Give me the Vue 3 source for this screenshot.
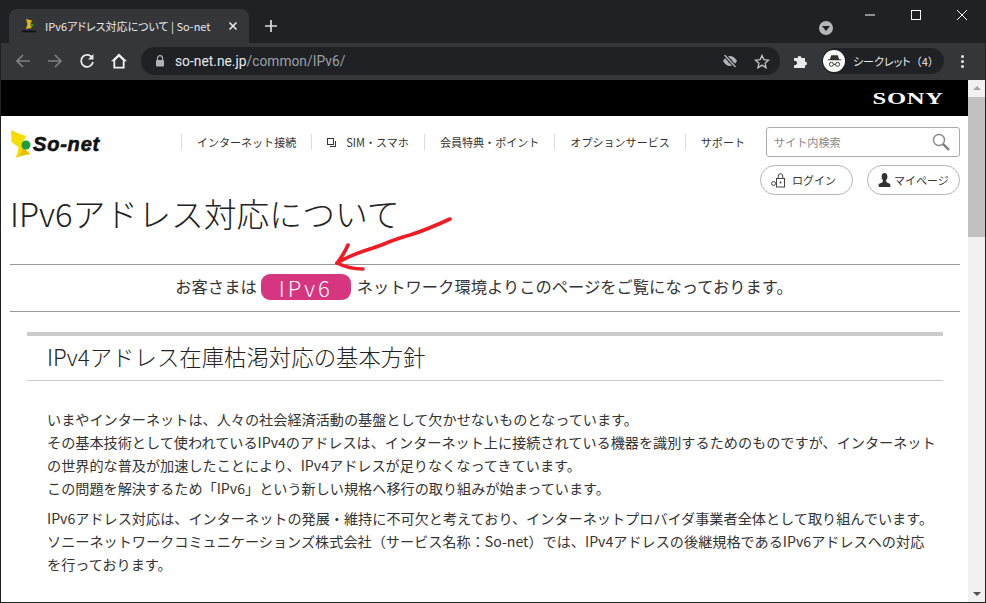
<template>
  <div class="window">
    <!-- タブバー -->
    <div class="tabstrip">
      <div class="tab">
        <svg class="favicon" width="16" height="16" viewBox="0 0 16 16">
          <path d="M5 1l6 1.500-1.500 3 1 4.500-5.500 1 1.500-5z" fill="#e8b810" />
          <circle cx="11" cy="7" r="1.600" fill="#2a9a30" />
          <rect x="1" y="12.500" width="14" height="1.800" fill="#111" />
        </svg>
        <span class="tab-title">IPv6アドレス対応について | So-net</span>
        <svg class="tab-close" width="10" height="10" viewBox="0 0 10 10">
          <path d="M1.500 1.500l7 7M8.500 1.500l-7 7" stroke="#e8eaed" stroke-width="1.600" />
        </svg>
      </div>
      <svg class="newtab" width="14" height="14" viewBox="0 0 14 14">
        <path d="M7 1v12M1 7h12" stroke="#dadce0" stroke-width="1.700" />
      </svg>
      <div class="strip-space"></div>
      <div class="tabsearch"><span></span></div>
      <div class="winbtns">
        <svg width="46" height="30" viewBox="0 0 46 30"><path d="M18 15h10" stroke="#fff" /></svg>
        <svg width="46" height="30" viewBox="0 0 46 30"><rect x="18.500" y="10.500" width="9" height="9" fill="none" stroke="#fff" /></svg>
        <svg width="46" height="30" viewBox="0 0 46 30"><path d="M18 10l10 10M28 10L18 20" stroke="#fff" /></svg>
      </div>
    </div>

    <!-- ツールバー -->
    <div class="toolbar">
      <svg class="tb-icon" width="16" height="16" viewBox="0 0 16 16">
        <path d="M15 8H2M8 2L2 8l6 6" fill="none" stroke="#7d8084" stroke-width="1.700" />
      </svg>
      <svg class="tb-icon" width="16" height="16" viewBox="0 0 16 16">
        <path d="M1 8h13M8 2l6 6-6 6" fill="none" stroke="#7d8084" stroke-width="1.700" />
      </svg>
      <svg class="tb-icon" width="16" height="16" viewBox="0 0 16 16">
        <path d="M13.500 5.200A6 6 0 1 0 14 9" fill="none" stroke="#e8eaed" stroke-width="1.800" />
        <path d="M14.500 1v5.500H9z" fill="#e8eaed" />
      </svg>
      <svg class="tb-icon" width="16" height="16" viewBox="0 0 16 16">
        <path d="M8 .500L0 8.300h2.400v7.200h11.200V8.300H16zM4.200 13.800V7.600L8 3.800l3.800 3.800v6.200z" fill="#f1f3f4" />
      </svg>
      <div class="omnibox">
        <svg class="lock" width="10" height="12" viewBox="0 0 10 12">
          <path d="M2.500 5V3.200a2.500 2.500 0 0 1 5 0V5" fill="none" stroke="#aeb1b5" stroke-width="1.200" />
          <rect x="1" y="5" width="8" height="6.500" rx="1" fill="#aeb1b5" />
        </svg>
        <span class="url"><b>so-net.ne.jp</b>/common/IPv6/</span>
        <svg class="omni-eye" width="16" height="14" viewBox="0 0 16 14">
          <path d="M1 7c2-3.400 4.400-5 7-5s5 1.600 7 5c-2 3.400-4.400 5-7 5s-5-1.600-7-5z" fill="#aeb1b5" />
          <circle cx="8" cy="7" r="2" fill="#202124" />
          <path d="M2.500 1l11 12" stroke="#202124" stroke-width="3.400" />
          <path d="M2.500 1l11 12" stroke="#aeb1b5" stroke-width="1.400" />
        </svg>
        <svg class="omni-star" width="16" height="15" viewBox="0 0 16 15">
          <path d="M8 1.500l1.900 4.200 4.600.5-3.400 3.100.9 4.500L8 11.100l-4 2.700.9-4.500L1.500 6.200l4.600-.5z" fill="none" stroke="#c4c7ca" stroke-width="1.300" />
        </svg>
      </div>
      <svg class="puzzle" width="16" height="16" viewBox="0 0 16 16">
        <path d="M1 5h3.500a2 2 0 1 1 4 0H12v3.500a2 2 0 1 1 0 4V15H1v-3a2.200 2.200 0 1 0 0-4z" fill="#e8eaed" />
      </svg>
      <div class="incognito">
        <span class="inc-avatar">
          <svg width="18" height="16" viewBox="0 0 18 16">
            <path d="M5 1h8l1.500 5H17v1.200H1V6h2.500z" fill="#333" />
            <circle cx="5.300" cy="12" r="2.400" fill="none" stroke="#333" stroke-width="1.200" />
            <circle cx="12.700" cy="12" r="2.400" fill="none" stroke="#333" stroke-width="1.200" />
            <path d="M7.700 12h2.600" stroke="#333" stroke-width="1.200" />
          </svg>
        </span>
        <span class="inc-label">シークレット<span class="inc-count">（4）</span></span>
      </div>
      <span class="kebab"><i></i><i></i><i></i></span>
    </div>

    <!-- ページ -->
    <div class="viewport">
      <div class="page">
        <div class="sonybar"><span class="sony">SONY</span></div>

        <header class="site-head">
          <div class="logo">
            <svg width="24" height="30" viewBox="0 0 24 30">
              <path d="M1 1c5 2.500 10 4.500 15 6l-4 8c2 4 4.500 7.500 8.500 10-5.500.500-10.500 2-15 4 1.500-3.500 3-7 3-11-2.500-1.500-5-3.500-7-5z" fill="#f7dc00" />
              <path d="M12 15c2 4 4.500 7.500 8.500 10-4.500.400-9 1.600-13 3.200 3.500-3.500 5.500-7.600 4.500-13.200z" fill="#e6c000" />
              <circle cx="16" cy="16" r="4.500" fill="#1e9c3a" />
            </svg>
            <span class="logo-text">So-net</span>
          </div>
          <div class="head-right">
            <div class="head-row">
              <nav class="gnav">
                <a v-for="item in navItems" :key="item.label" class="gnav-item">
                  <svg v-if="item.icon" class="gnav-icon" width="9" height="9" viewBox="0 0 9 9">
                    <rect x="0.500" y="0.500" width="6" height="6" fill="none" stroke="#333" />
                    <path d="M8.500 3v5.500H3" fill="none" stroke="#333" />
                  </svg>
                  {{ item.label }}
                </a>
              </nav>
              <div class="search">
                <span class="search-ph">サイト内検索</span>
                <svg width="18" height="18" viewBox="0 0 18 18">
                  <circle cx="7" cy="7" r="5.500" fill="none" stroke="#888" stroke-width="1.400" />
                  <path d="M11 11l6 6" stroke="#777" stroke-width="2.400" />
                </svg>
              </div>
            </div>
            <div class="head-row2">
              <a class="pill pill-login">
                <svg width="14" height="15" viewBox="0 0 14 15">
                  <rect x="5.500" y="5.500" width="8" height="8.500" fill="none" stroke="#444" />
                  <path d="M7.200 5.500V3a2.300 2.300 0 0 1 4.600 0v2.500" fill="none" stroke="#444" />
                  <circle cx="9.500" cy="9.500" r="1" fill="#444" />
                  <circle cx="2.500" cy="10.500" r="2" fill="none" stroke="#444" />
                </svg>
                ログイン
              </a>
              <a class="pill pill-mypage">
                <svg width="13" height="14" viewBox="0 0 13 14">
                  <ellipse cx="6.500" cy="3.800" rx="2.900" ry="3.800" fill="#333" />
                  <path d="M5 7h3l.5 2.200 3.800 1.800V14H.7v-3l3.800-1.800z" fill="#333" />
                </svg>
                マイページ
              </a>
            </div>
          </div>
        </header>

        <h1 class="page-title">IPv6アドレス対応について</h1>
        <div class="notice">
          お客さまは<span class="badge">IPv6</span>ネットワーク環境よりこのページをご覧になっております。
        </div>

        <section class="policy">
          <h2>IPv4アドレス在庫枯渇対応の基本方針</h2>
          <p>
            いまやインターネットは、人々の社会経済活動の基盤として欠かせないものとなっています。<br />
            その基本技術として使われているIPv4のアドレスは、インターネット上に接続されている機器を識別するためのものですが、インターネットの世界的な普及が加速したことにより、IPv4アドレスが足りなくなってきています。<br />
            この問題を解決するため「IPv6」という新しい規格へ移行の取り組みが始まっています。
          </p>
          <p>
            IPv6アドレス対応は、インターネットの発展・維持に不可欠と考えており、インターネットプロバイダ事業者全体として取り組んでいます。<br />
            ソニーネットワークコミュニケーションズ株式会社（サービス名称：So-net）では、IPv4アドレスの後継規格であるIPv6アドレスへの対応を行っております。
          </p>
        </section>

        <!-- 赤い手書き矢印 -->
        <svg class="arrow" width="130" height="60" viewBox="0 0 130 60">
          <path d="M117 6C104 12 90 18 77 22C64 25 52 31 40 35C27 39 14 44 4 50" fill="none" stroke="#ee1c25" stroke-width="3.600" stroke-linecap="round" />
          <path d="M15 32C12 39 8 45 4 50C12 54 20 56 30 56" fill="none" stroke="#ee1c25" stroke-width="3.600" stroke-linecap="round" stroke-linejoin="round" />
        </svg>
      </div>

      <div class="scrollbar">
        <span class="sb-up"></span>
        <div class="sb-track"><div class="sb-thumb"></div></div>
        <span class="sb-down"></span>
      </div>
    </div>
  </div>
</template>

<script setup>
const navItems = [
  { label: 'インターネット接続' },
  { label: 'SIM・スマホ', icon: true },
  { label: '会員特典・ポイント' },
  { label: 'オプションサービス' },
  { label: 'サポート' }
]
</script>

<style scoped>
.window {
  width: 986px;
  height: 603px;
  box-sizing: border-box;
  display: flex;
  flex-direction: column;
  overflow: hidden;
  background: #202124;
  border: 1px solid #202124;
  border-top: 0;
  font-family: "Noto Sans CJK JP", "Noto Sans", sans-serif;
}

/* タブバー */
.tabstrip {
  height: 43px;
  flex: none;
  display: flex;
  align-items: flex-end;
  background: #202124;
}
.tab {
  width: 240px;
  height: 34px;
  margin-left: 8px;
  background: #35363a;
  border-radius: 8px 8px 0 0;
  display: flex;
  align-items: center;
  box-sizing: border-box;
  padding: 0 11px 0 12px;
  color: #e8eaed;
}
.favicon {
  flex: none;
}
.tab-title {
  margin-left: 8px;
  flex: 1;
  font-size: 11px;
  font-feature-settings: "palt";
  white-space: nowrap;
  overflow: hidden;
}
.newtab {
  margin: 0 0 10px 15px;
}
.strip-space {
  flex: 1;
}
.tabsearch {
  width: 14px;
  height: 14px;
  border-radius: 50%;
  background: #b4b6b9;
  margin: 0 0 8px 0;
  display: flex;
  align-items: center;
  justify-content: center;
}
.tabsearch span {
  width: 0;
  height: 0;
  border-left: 4px solid transparent;
  border-right: 4px solid transparent;
  border-top: 5px solid #202124;
  margin-top: 1px;
}
.winbtns {
  display: flex;
  align-self: flex-start;
  margin-left: 14px;
}

/* ツールバー */
.toolbar {
  height: 37px;
  flex: none;
  display: flex;
  align-items: center;
  background: #35363a;
  box-sizing: border-box;
  padding: 0 0 1px 14px;
}
.tb-icon {
  margin-right: 16px;
  flex: none;
}
.omnibox {
  width: 639px;
  height: 28px;
  margin-left: -2px;
  background: #202124;
  border-radius: 14px;
  display: flex;
  align-items: center;
  box-sizing: border-box;
  padding: 0 10px 0 14px;
}
.lock {
  flex: none;
}
.url {
  margin-left: 10px;
  flex: 1;
  font-family: "Roboto", "Noto Sans", sans-serif;
  font-size: 13.8px;
  color: #9aa0a6;
}
.url b {
  font-weight: 400;
  color: #e8eaed;
}
.omni-eye {
  margin-right: 16px;
}
.puzzle {
  margin-left: 13px;
  flex: none;
}
.incognito {
  width: 122px;
  height: 26px;
  margin-left: 13px;
  flex: none;
  border-radius: 13px;
  background: #202124;
  display: flex;
  align-items: center;
  box-sizing: border-box;
  padding-left: 1px;
}
.inc-avatar {
  width: 22px;
  height: 22px;
  border-radius: 50%;
  background: #fff;
  display: flex;
  align-items: center;
  justify-content: center;
}
.inc-avatar svg {
  width: 15px;
  height: 14px;
}
.inc-label {
  margin-left: 8px;
  color: #e8eaed;
  font-size: 11px;
  font-feature-settings: "palt";
  white-space: nowrap;
}
.inc-count {
  font-feature-settings: normal;
}
.kebab {
  margin-left: 17px;
  display: flex;
  flex-direction: column;
  gap: 2px;
}
.kebab i {
  width: 3px;
  height: 3px;
  border-radius: 50%;
  background: #e8eaed;
}

/* ページ */
.viewport {
  flex: 1;
  display: flex;
  min-height: 0;
  background: #fff;
}
.page {
  flex: 1;
  min-width: 0;
  position: relative;
  overflow: hidden;
  color: #333;
}
.sonybar {
  height: 36px;
  background: #000;
  display: flex;
  align-items: flex-end;
  justify-content: flex-end;
  padding: 0 24px 0 0;
  box-sizing: border-box;
}
.sony {
  font-family: "Liberation Serif", serif;
  font-weight: 700;
  font-size: 16.5px;
  line-height: 21px;
  color: #fff;
  transform: scaleX(1.49);
  transform-origin: right center;
  letter-spacing: 0.5px;
  margin-bottom: 7px;
}
.site-head {
  display: flex;
  padding: 11px 8px 0 9px;
  height: 79px;
  box-sizing: border-box;
}
.logo {
  display: flex;
  align-items: flex-start;
  padding-top: 2px;
}
.logo-text {
  font-family: "Liberation Sans", sans-serif;
  font-weight: 700;
  font-style: italic;
  font-size: 20px;
  line-height: 30px;
  letter-spacing: 0.8px;
  -webkit-text-stroke: 0.6px #111;
  color: #111;
  margin-left: -1px;
}
.head-right {
  margin-left: auto;
}
.head-row {
  display: flex;
  align-items: center;
}
.gnav {
  display: flex;
  margin-right: 6px;
}
.gnav-item {
  display: flex;
  align-items: center;
  height: 16px;
  padding: 0 15px;
  border-left: 1px solid #ddd;
  font-size: 11.05px;
  line-height: 16px;
  color: #333;
  white-space: nowrap;
}
.gnav-icon {
  margin-right: 10px;
}
.search {
  width: 194px;
  height: 30px;
  box-sizing: border-box;
  border: 1px solid #aaa;
  border-radius: 3px;
  display: flex;
  align-items: center;
  justify-content: space-between;
  padding: 0 9px 0 7px;
}
.search-ph {
  font-size: 11.1px;
  color: #888;
}
.head-row2 {
  display: flex;
  justify-content: flex-end;
  gap: 14px;
  margin-top: 8px;
}
.pill {
  width: 93px;
  height: 30px;
  box-sizing: border-box;
  border: 1px solid #b5b5b5;
  border-radius: 15px;
  display: flex;
  align-items: center;
  font-size: 11px;
  color: #333;
  white-space: nowrap;
}
.pill-login {
  padding-left: 10px;
  gap: 7px;
}
.pill-mypage {
  padding-left: 10px;
  gap: 3px;
}
.page-title {
  margin: -4px 8px 0 9px;
  font-size: 32.8px;
  font-weight: 300;
  line-height: 44px;
  height: 74px;
  box-sizing: border-box;
  border-bottom: 1px solid #999;
  color: #222;
  white-space: nowrap;
}
.notice {
  margin: 0 8px 0 9px;
  padding: 0 2px 4px 0;
  height: 47px;
  box-sizing: border-box;
  border-bottom: 1px solid #999;
  display: flex;
  align-items: center;
  justify-content: center;
  font-size: 16.3px;
  color: #333;
  white-space: nowrap;
}
.badge {
  display: inline-block;
  width: 90px;
  height: 26px;
  margin: 2px 6px 0 4px;
  border-radius: 9px;
  background: #d6357f;
  color: #fff;
  font-size: 22px;
  font-weight: 300;
  line-height: 26px;
  letter-spacing: 3px;
  text-align: center;
}
.policy {
  margin: 20px 25px 0 26px;
  border-top: 4px solid #ccc;
}
.policy h2 {
  margin: 0;
  padding: 0 0 0 20px;
  height: 45px;
  box-sizing: border-box;
  border-bottom: 1px solid #ccc;
  font-size: 22.4px;
  font-weight: 300;
  line-height: 40px;
  color: #222;
}
.policy p {
  margin: 0 0 7px;
  padding: 0 5px 0 20px;
  font-size: 14.15px;
  line-height: 23px;
  color: #333;
}
.policy h2 + p {
  margin-top: 27px;
}
.arrow {
  position: absolute;
  left: 332px;
  top: 133px;
}

/* スクロールバー */
.scrollbar {
  width: 17px;
  flex: none;
  background: #f1f1f1;
  display: flex;
  flex-direction: column;
  align-items: center;
}
.sb-up,
.sb-down {
  width: 0;
  height: 0;
  flex: none;
  border-left: 4px solid transparent;
  border-right: 4px solid transparent;
}
.sb-up {
  border-bottom: 4px solid #a3a3a3;
  margin: 6px 0 7px;
}
.sb-down {
  border-top: 4px solid #505050;
  margin: 7px 0 6px;
}
.sb-track {
  flex: 1;
  width: 100%;
}
.sb-thumb {
  height: 140px;
  background: #c1c1c1;
}
</style>
